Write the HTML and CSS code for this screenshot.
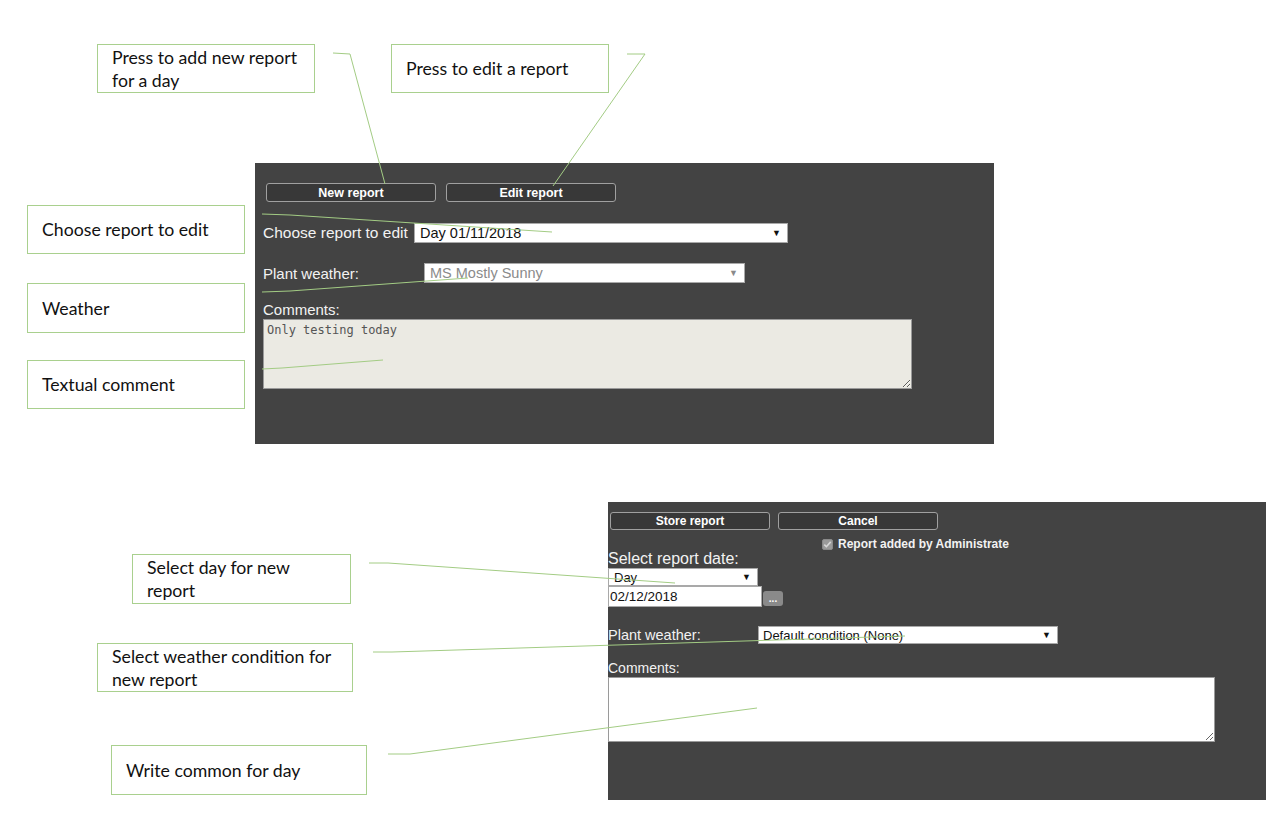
FILE: index.html
```html
<!DOCTYPE html>
<html lang="en">
<head>
<meta charset="utf-8">
<title>Daily report help</title>
<link rel="stylesheet" href="styles.css">
</head>
<body>
<div class="canvas">

  <div class="callout c-new"><span>Press to add new report for a day</span></div>
  <div class="callout c-edit"><span>Press to edit a report</span></div>
  <div class="callout c-choose"><span>Choose report to edit</span></div>
  <div class="callout c-weather"><span>Weather</span></div>
  <div class="callout c-comment"><span>Textual comment</span></div>
  <div class="callout c-day"><span>Select day for new report</span></div>
  <div class="callout c-cond"><span>Select weather condition for new report</span></div>
  <div class="callout c-write"><span>Write common for day</span></div>

  <section class="panel panel-edit">
    <div class="btn-row">
      <button class="btn btn-wide">New report</button>
      <button class="btn btn-wide">Edit report</button>
    </div>
    <div class="field-row row-choose">
      <span class="label label-choose">Choose report to edit</span>
      <div class="select sel-choose"><span>Day 01/11/2018</span><span class="arrow">▼</span></div>
    </div>
    <div class="field-row row-weather">
      <span class="label label-fixed">Plant weather:</span>
      <div class="select sel-weather disabled"><span>MS Mostly Sunny</span><span class="arrow">▼</span></div>
    </div>
    <div class="label label-comments">Comments:</div>
    <textarea class="comments comments-old" readonly>Only testing today</textarea>
  </section>

  <section class="panel panel-new">
    <div class="btn-row btn-row-new">
      <button class="btn btn-new">Store report</button>
      <button class="btn btn-new">Cancel</button>
    </div>
    <div class="check-row">
      <span class="checkbox">
        <svg width="11" height="11" viewBox="0 0 11 11"><rect x="0.5" y="0.5" width="10" height="10" rx="1.5" fill="#9a9a9a" stroke="#8a8a8a"/><path d="M2.3 5.6 L4.4 7.7 L8.7 2.9" fill="none" stroke="#d8d8d8" stroke-width="1.6"/></svg>
      </span>
      <span class="check-label">Report added by Administrate</span>
    </div>
    <div class="label2 label-date">Select report date:</div>
    <div class="select sel-day"><span>Day</span><span class="arrow">▼</span></div>
    <div class="date-row">
      <div class="date-input">02/12/2018</div>
      <button class="dots">...</button>
    </div>
    <div class="field-row row-cond">
      <span class="label2 label-w2">Plant weather:</span>
      <div class="select sel-cond"><span>Default condition (None)</span><span class="arrow">▼</span></div>
    </div>
    <div class="label2 label-comments2">Comments:</div>
    <textarea class="comments comments-new" readonly></textarea>
  </section>

  <svg class="leaders" width="1288" height="818" viewBox="0 0 1288 818">
    <g fill="none" stroke="#a3cc84" stroke-width="1">
      <polyline points="333,53 350,54 385,184"/>
      <polyline points="627,54 645,54 553,186"/>
      <polyline points="262,214 290,215 552,232"/>
      <polyline points="262,292 290,291 468,278"/>
      <polyline points="262,369 282,368 383,360"/>
      <polyline points="369,563 388,563 675,583"/>
      <polyline points="373,652 392,652 905,636"/>
      <polyline points="388,754 410,754 757,708"/>
    </g>
  </svg>
</div>
</body>
</html>
```
FILE: styles.css
```css
html, body {
  margin: 0;
  padding: 0;
  background: #ffffff;
}

.canvas {
  position: relative;
  width: 1288px;
  height: 818px;
  overflow: hidden;
  background: #ffffff;
  font-family: "Liberation Sans", Arial, sans-serif;
}

/* ---------- callouts ---------- */
.callout {
  position: absolute;
  box-sizing: border-box;
  border: 1px solid #a9d08e;
  background: #ffffff;
  display: flex;
  align-items: center;
  font-family: Lato, "Open Sans", sans-serif;
  font-size: 17.7px;
  line-height: 23px;
  color: #111;
  padding-left: 14px;
  padding-right: 10px;
}
.c-new     { left: 97px;  top: 44px;  width: 218px; height: 49px; }
.c-edit    { left: 391px; top: 44px;  width: 218px; height: 49px; }
.c-choose  { left: 27px;  top: 205px; width: 218px; height: 49px; }
.c-weather { left: 27px;  top: 283px; width: 218px; height: 50px; }
.c-comment { left: 27px;  top: 360px; width: 218px; height: 49px; }
.c-day     { left: 132px; top: 554px; width: 219px; height: 50px; }
.c-cond    { left: 97px;  top: 643px; width: 256px; height: 49px; }
.c-write   { left: 111px; top: 745px; width: 256px; height: 50px; }

/* ---------- panels ---------- */
.panel {
  position: absolute;
  box-sizing: border-box;
  background: #434343;
  color: #f2f2f2;
}
.panel-edit {
  left: 255px;
  top: 163px;
  width: 739px;
  height: 281px;
  padding: 20px 0 0 8px;
}
.panel-new {
  left: 608px;
  top: 502px;
  width: 658px;
  height: 298px;
  padding: 10px 0 0 0;
}

.btn-row {
  display: flex;
  gap: 10px;
  margin-left: 3px;
}
.btn {
  box-sizing: border-box;
  background: #383838;
  border: 1px solid #a0a0a0;
  border-radius: 3px;
  color: #ffffff;
  font-family: "Liberation Sans", Arial, sans-serif;
  font-weight: bold;
  font-size: 12px;
  padding: 0;
  line-height: 16px;
}
.btn-wide { width: 170px; height: 19px; font-size: 12.5px; }
.btn-row-new { gap: 8px; margin-left: 2px; }
.btn-new { width: 160px; height: 18px; }

.field-row {
  display: flex;
  align-items: center;
}
.label {
  font-size: 15px;
  color: #f2f2f2;
}
.row-choose { margin-top: 21px; height: 20px; }
.label-choose { font-size: 15.5px; width: 151px; flex: none; white-space: nowrap; }
.row-weather { margin-top: 20px; height: 20px; }
.label-fixed { width: 161px; flex: none; }
.label-comments { margin-top: 18px; line-height: 18px; }

.select {
  box-sizing: border-box;
  background: #ffffff;
  border: 1px solid #a9a9a9;
  display: flex;
  align-items: center;
  justify-content: space-between;
  color: #111;
  font-family: "Liberation Sans", Arial, sans-serif;
}
.select .arrow {
  font-size: 9px;
  color: #111;
}
.sel-choose {
  width: 374px;
  height: 20px;
  font-size: 14.5px;
  padding: 0 6px 0 5px;
}
.sel-weather {
  width: 321px;
  height: 20px;
  font-size: 14.5px;
  padding: 0 6px 0 5px;
}
.disabled { color: #8a8a8a; }
.disabled .arrow { color: #8a8a8a; }

.comments {
  display: block;
  box-sizing: border-box;
  border: 1px solid #9a9a9a;
  margin: 0;
  font-family: "DejaVu Sans Mono", "Liberation Mono", monospace;
  font-size: 12px;
  line-height: 14px;
  padding: 3px 3px;
  outline: none;
}
.comments-old {
  width: 649px;
  height: 70px;
  margin-top: 0;
  background: #ebeae3;
  color: #555;
}

/* panel 2 */
.check-row {
  display: flex;
  align-items: center;
  margin-left: 214px;
  margin-top: 7px;
  height: 14px;
}
.checkbox { display: flex; width: 11px; height: 11px; margin-right: 5px; }
.check-label {
  font-weight: bold;
  font-size: 12px;
  color: #f2f2f2;
}
.label2 {
  font-size: 14px;
  color: #f2f2f2;
}
.label-date {
  font-size: 16px;
  line-height: 18px;
  margin-top: -1px;
}
.sel-day {
  width: 150px;
  height: 18px;
  font-size: 13px;
  padding: 0 6px 0 5px;
  margin-top: 0;
}
.date-row {
  display: flex;
  align-items: center;
}
.date-input {
  box-sizing: border-box;
  width: 154px;
  height: 21px;
  background: #fff;
  border: 1px solid #a9a9a9;
  color: #111;
  font-size: 13.5px;
  line-height: 19px;
  padding-left: 1px;
}
.dots {
  box-sizing: border-box;
  width: 20px;
  height: 15px;
  margin-left: 1px;
  margin-top: 4px;
  background: #8a8a8a;
  border: none;
  border-radius: 3px;
  color: #fff;
  font-weight: bold;
  font-size: 10px;
  line-height: 8px;
  padding: 0;
}
.row-cond { margin-top: 19px; height: 18px; }
.label-w2 { width: 150px; flex: none; font-size: 14.5px; }
.sel-cond {
  width: 300px;
  height: 18px;
  font-size: 13px;
  padding: 0 6px 0 4px;
}
.label-comments2 { margin-top: 16px; line-height: 17px; }
.comments-new {
  width: 607px;
  height: 65px;
  background: #fff;
  margin-top: 0;
}

/* ---------- leader lines ---------- */
.leaders {
  position: absolute;
  left: 0;
  top: 0;
  pointer-events: none;
}
```
